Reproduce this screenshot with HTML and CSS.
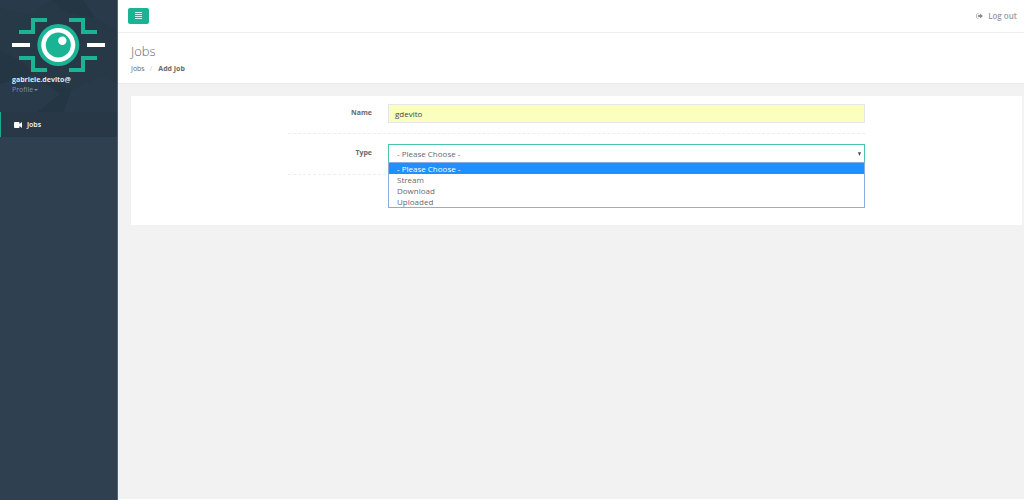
FILE: index.html
```html
<!DOCTYPE html>
<html lang="en">
<head>
<meta charset="utf-8">
<title>Add Job</title>
<link rel="stylesheet" href="styles.css">
</head>
<body>
<div class="app">
  <nav class="sidebar">
    <header class="profile">
      <svg class="facets" viewBox="0 0 118 112" preserveAspectRatio="none" aria-hidden="true">
        <path fill="#2b3d4e" d="M0 0H52L30 14 0 8zM84 0h34v30L96 18zM0 84l34-10 26 20-22 18H0zM72 90l30-14 16 8v28H64z"/>
        <path fill="#233342" d="M52 0h32l12 18-30-6zM0 50l22 12 12 12-34 10zM34 74l38 16-8 22H38l22-18z"/>
      </svg>
      <svg class="logo" viewBox="12 16 93 58" role="img" aria-label="Eye logo">
        <g fill="none" stroke="#1ab394" stroke-width="4">
          <path d="M19 32H33V20H47M97 32H83V20H69M19 58H33V70H47M97 58H83V70H69"/>
        </g>
        <path fill="#fff" d="M12 43H30V47H12zM87 43H105V47H87z"/>
        <circle cx="58.3" cy="45" r="21" fill="#1ab394"/>
        <circle cx="58.3" cy="45" r="17" fill="#fff"/>
        <circle cx="58.3" cy="45" r="12.500" fill="#1ab394"/>
        <circle cx="62.3" cy="40.8" r="4.2" fill="#fff"/>
      </svg>
      <strong class="user">gabriele.devito@</strong>
      <button class="profile-menu" type="button">Profile<span class="caret"></span></button>
    </header>
    <a class="nav-item" href="#jobs">
      <svg class="video" viewBox="0 0 16 12" aria-hidden="true"><path fill="#fff" d="M2 0h7q2 0 2 2v2l5-4v12l-5-4v2q0 2-2 2H2q-2 0-2-2V2q0-2 2-2z"/></svg>
      Jobs
    </a>
  </nav>
  <div class="main">
    <div class="topbar">
      <button class="toggle" type="button" aria-label="Toggle navigation">
        <svg class="bars" viewBox="0 0 7 7" aria-hidden="true"><path fill="#fff" fill-opacity=".8" d="M0 0h7v1H0zM0 2h7v1H0zM0 4h7v1H0zM0 6h7v1H0z"/></svg>
      </button>
      <a class="logout" href="#logout">
        <svg class="exit" viewBox="0 0 14 12" aria-hidden="true"><path fill="none" stroke="#999c9e" stroke-width="1.4" d="M5 1.5H3Q1 1.5 1 3.500v5q0 2 2 2h2"/><path fill="#8b8e90" d="M4 4h4V1l6 5-6 5V8H4z"/></svg>
        Log out
      </a>
    </div>
    <header class="heading">
      <h1>Jobs</h1>
      <ol class="breadcrumb">
        <li><a href="#jobs">Jobs</a></li>
        <li><strong>Add Job</strong></li>
      </ol>
    </header>
    <main class="content">
      <div class="panel">
        <form class="form">
          <div class="row">
            <label for="name">Name</label>
            <input class="control filled" id="name" type="text" value="gdevito">
          </div>
          <div class="row">
            <label for="type">Type</label>
            <div class="picker">
              <select class="control choice" id="type">
                <option>- Please Choose -</option>
                <option>Stream</option>
                <option>Download</option>
                <option>Uploaded</option>
              </select>
              <svg class="arrow" viewBox="0 0 4 5" aria-hidden="true"><path fill="#444" d="M0 0h4L2 5z"/></svg>
              <ul class="options" role="listbox" aria-label="Type">
                <li class="selected" role="option" aria-selected="true">- Please Choose -</li>
                <li role="option">Stream</li>
                <li role="option">Download</li>
                <li role="option">Uploaded</li>
              </ul>
            </div>
          </div>
        </form>
      </div>
    </main>
  </div>
</div>
</body>
</html>
```
FILE: styles.css
```css
* { box-sizing: border-box; }
body {
  margin: 0;
  background: #fff;
  color: #676a6c;
  font: 7px/10px "Open Sans", sans-serif;
}
a { color: inherit; text-decoration: none; }
button, input, select { font: inherit; color: inherit; }
.app { display: flex; min-height: 100vh; }

.sidebar {
  flex: none;
  width: 118px;
  background: #2f4050;
  border-right: 1px solid #566472;
}
.profile {
  position: relative;
  display: flex;
  flex-direction: column;
  align-items: flex-start;
  height: 112px;
  padding: 16px 12px 0;
  background: #273847;
}
.facets { position: absolute; inset: 0; width: 100%; height: 100%; opacity: .5; }
.logo { position: relative; width: 93px; height: 58px; }
.user { position: relative; color: #dfe4ed; line-height: 12px; }
.profile-menu {
  position: relative;
  display: flex;
  align-items: center;
  gap: 1px;
  padding: 0;
  border: 0;
  background: none;
  color: #7f8fa4;
  line-height: 8px;
}
.caret { border: 2px solid transparent; border-top-color: currentColor; border-bottom: 0; }
.nav-item {
  display: flex;
  align-items: center;
  gap: 5px;
  height: 25px;
  padding-left: 13px;
  border-left: 1px solid #19aa8d;
  background: #293846;
  color: #fff;
  font-weight: 600;
}
.video { width: 8px; height: 6px; }

.main {
  flex: 1;
  min-width: 0;
  margin-bottom: 1px;
  background: #f2f2f2;
}
.topbar {
  display: flex;
  justify-content: space-between;
  align-items: center;
  height: 33px;
  padding: 0 7px 1px 10px;
  border-bottom: 1px solid #eee;
  background: #fff;
}
.toggle {
  display: flex;
  align-items: center;
  justify-content: center;
  width: 21px;
  height: 16px;
  padding: 0;
  border: 0;
  border-radius: 2px;
  background: #1ab394;
}
.bars { width: 7px; height: 7px; }
.logout {
  display: flex;
  align-items: center;
  gap: 5px;
  color: #999c9e;
  font-size: 8px;
  font-weight: 600;
}
.exit { width: 7px; height: 6px; }
.heading {
  height: 51px;
  padding: 10px 13px 0;
  border-bottom: 1px solid #e7eaec;
  background: #fff;
}
h1 { margin: 0; font-size: 13px; font-weight: 300; line-height: 16px; }
.breadcrumb { display: flex; margin: 5px 0 0; padding: 0; list-style: none; }
.breadcrumb li + li::before { content: "/"; padding: 0 6px 0 5px; color: #ccc; }

.content { padding: 12px 2px 0 13px; }
.panel { padding: 8px 0 50px; background: #fff; }
.form { width: 65%; max-width: 577px; min-width: 320px; margin: 0 auto; }
.row {
  display: flex;
  gap: 16px;
  height: 30px;
  border-bottom: 1px dashed #eee;
}
.row + .row { height: 41px; padding-top: 10px; }
.row label { width: 84px; padding-top: 4px; text-align: right; font-weight: 700; }
.control {
  flex: 1;
  width: 100%;
  min-width: 0;
  height: 19px;
  padding: 0 6px;
  border: 1px solid #e5e6e7;
  outline: 0;
  border-radius: 0;
  font-size: 8px;
}
.filled { background: #faffbd; color: #444; }
.picker { position: relative; flex: 1; }
.choice {
  display: block;
  appearance: none;
  padding: 0 8px;
  border-color: #4cc4ac;
  background: #fff;
}
.arrow { position: absolute; top: 8px; right: 4px; width: 3px; height: 4px; }
.options {
  position: absolute;
  top: 18px;
  left: 0;
  right: 0;
  margin: 0;
  padding: 0;
  border: 1px solid #8bacdf;
  background: #fff;
  list-style: none;
  font-size: 8px;
}
.options li { height: 11px; padding-left: 8px; line-height: 11px; }
.options .selected { background: #1e90ff; color: #fff; }
```
